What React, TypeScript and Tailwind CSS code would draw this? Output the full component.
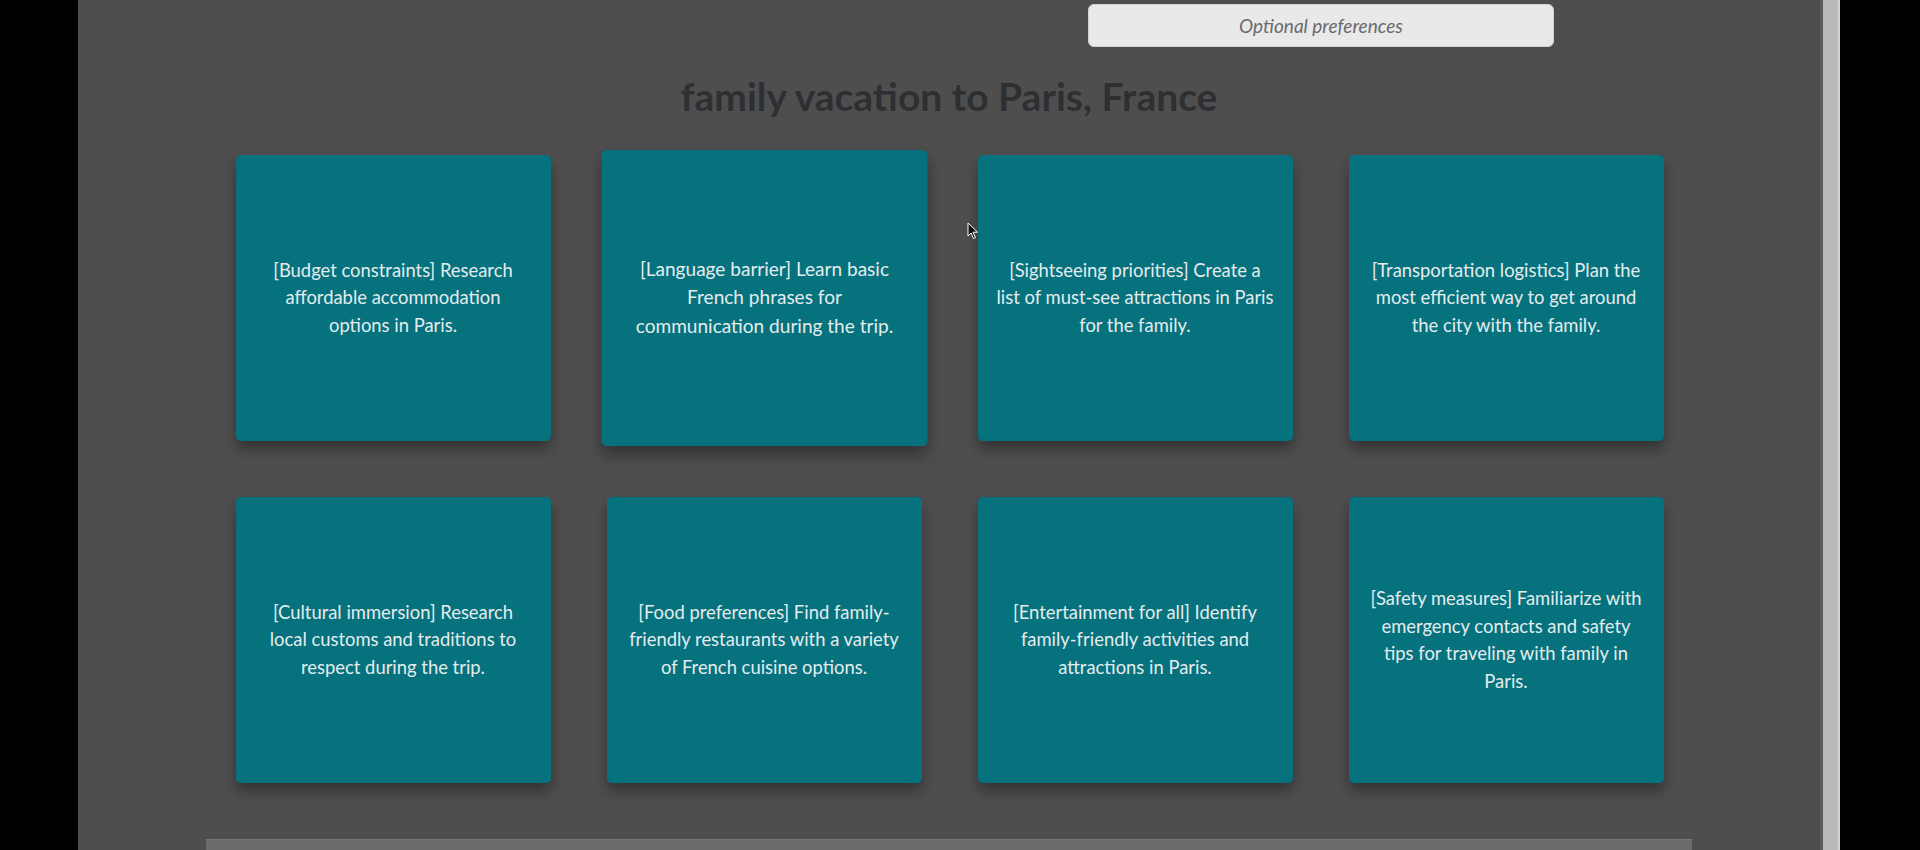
const CARDS: { lines: string[]; hover?: boolean }[] = [
  { lines: ["[Budget constraints] Research", "affordable accommodation", "options in Paris."] },
  { lines: ["[Language barrier] Learn basic", "French phrases for", "communication during the trip."], hover: true },
  { lines: ["[Sightseeing priorities] Create a", "list of must-see attractions in Paris", "for the family."] },
  { lines: ["[Transportation logistics] Plan the", "most efficient way to get around", "the city with the family."] },
  { lines: ["[Cultural immersion] Research", "local customs and traditions to", "respect during the trip."] },
  { lines: ["[Food preferences] Find family-", "friendly restaurants with a variety", "of French cuisine options."] },
  { lines: ["[Entertainment for all] Identify", "family-friendly activities and", "attractions in Paris."] },
  { lines: ["[Safety measures] Familiarize with", "emergency contacts and safety", "tips for traveling with family in", "Paris."] },
];

function Card({ lines, hover }: { lines: string[]; hover?: boolean }) {
  return (
    <div
      className={`flex h-[286px] w-[315px] items-center justify-center rounded-[5px] bg-[#06727d] px-3 text-center text-[18.4px] leading-[27.5px] text-[#e4ecee] shadow-[0_8px_14px_rgba(0,0,0,0.35)] ${
        hover ? "scale-[1.035]" : ""
      }`}
    >
      <p>
        {lines.map((l, i) => (
          <span key={i}>
            {l}
            {i < lines.length - 1 && <br />}
          </span>
        ))}
      </p>
    </div>
  );
}

export default function App() {
  return (
    <div className="flex h-[850px] w-[1920px] overflow-hidden bg-black font-['Lato','Liberation_Sans',sans-serif]">
      <div className="w-[78px] shrink-0" />

      <main className="relative flex w-[1742px] shrink-0 flex-col items-center bg-[#4e4e4e]">
        {/* fila de entradas (solo se ve la de preferencias) */}
        <div className="flex w-full pl-[1010px] pt-[4px]">
          <div className="flex h-[43px] w-[466px] items-center justify-center rounded-md border border-[#d2d2d2] bg-[#e9e9e9] pt-[1px] text-[19px] italic text-[#6a6a6c]">
            Optional preferences
          </div>
        </div>

        <h1 className="mt-[27px] text-[39px] font-bold leading-[44px] text-[#2e2f33]">
          family vacation to Paris, France
        </h1>

        <div className="ml-[1px] mt-[37px] grid grid-cols-[repeat(4,315px)] gap-[56px]">
          {CARDS.map((c, i) => (
            <Card key={i} lines={c.lines} hover={c.hover} />
          ))}
        </div>

        <div className="mt-[56px] h-[40px] w-[1486px] shrink-0 border-t border-[#777] bg-[#6b6b6b]" />

        {/* puntero del ratón */}
        <svg className="absolute left-[889px] top-[222px]" width="12" height="18" viewBox="0 0 12 18">
          <path d="M1 1 L1 14 L4 11 L6.5 16.5 L8.5 15.6 L6 10.2 L10.5 10.2 Z" fill="#111" stroke="#fff" strokeWidth="1" />
        </svg>
      </main>

      {/* barra de scroll */}
      <div className="flex w-[20px] shrink-0">
        <div className="w-[3px] bg-[#5c5c5c]" />
        <div className="flex-1 bg-[#bababa]" />
        <div className="w-[2px] bg-[#d4d4d4]" />
      </div>

      <div className="flex-1" />
    </div>
  );
}
